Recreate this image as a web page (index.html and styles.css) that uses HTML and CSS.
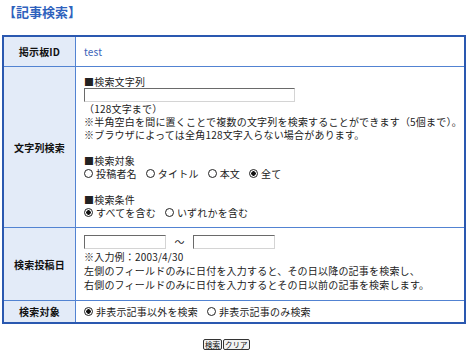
FILE: index.html
```html
<!DOCTYPE html>
<html lang="ja">

<head>
    <meta charset="UTF-8">
    <title>記事検索</title>
    <link rel="stylesheet" href="styles.css">
</head>

<body>
    <h1 class="page-title">【記事検索】</h1>

    <form class="search-form" onsubmit="return false;">
        <table class="search-table">
            <tr class="row-id">
                <th class="label">掲示板ID</th>
                <td class="value"><span class="board-id">test</span></td>
            </tr>
            <tr class="row-text">
                <th class="label">文字列検索</th>
                <td class="value">
                    <div class="line">■検索文字列</div>
                    <input type="text" class="field field-long">
                    <div class="line">（128文字まで）</div>
                    <div class="line">※半角空白を間に置くことで複数の文字列を検索することができます（5個まで）。</div>
                    <div class="line">※ブラウザによっては全角128文字入らない場合があります。</div>
                    <div class="line gap">■検索対象</div>
                    <div class="line options">
                        <label><input type="radio" name="target">投稿者名</label>
                        <label><input type="radio" name="target">タイトル</label>
                        <label><input type="radio" name="target">本文</label>
                        <label><input type="radio" name="target" checked>全て</label>
                    </div>
                    <div class="line gap">■検索条件</div>
                    <div class="line options">
                        <label><input type="radio" name="cond" checked>すべてを含む</label>
                        <label><input type="radio" name="cond">いずれかを含む</label>
                    </div>
                </td>
            </tr>
            <tr class="row-date">
                <th class="label">検索投稿日</th>
                <td class="value">
                    <div class="date-range">
                        <input type="text" class="field field-date">
                        <span class="tilde">～</span>
                        <input type="text" class="field field-date">
                    </div>
                    <div class="line">※入力例：2003/4/30</div>
                    <div class="line">左側のフィールドのみに日付を入力すると、その日以降の記事を検索し、</div>
                    <div class="line">右側のフィールドのみに日付を入力するとその日以前の記事を検索します。</div>
                </td>
            </tr>
            <tr class="row-hidden">
                <th class="label">検索対象</th>
                <td class="value">
                    <div class="line options">
                        <label><input type="radio" name="hidden" checked>非表示記事以外を検索</label>
                        <label><input type="radio" name="hidden">非表示記事のみ検索</label>
                    </div>
                </td>
            </tr>
        </table>

        <div class="buttons">
            <button type="submit" class="btn">検索</button>
            <button type="reset" class="btn">クリア</button>
        </div>
    </form>
</body>

</html>
```

FILE: styles.css
```css
body {
    margin: 0;
    padding: 3px 4px 0 2px;
    font-family: "Noto Sans CJK JP", sans-serif;
    font-size: 10px;
    letter-spacing: 0.2px;
    line-height: 13px;
    color: #222;
    background: #fff;
}

.page-title {
    margin: 0 0 15px 1px;
    font-size: 13px;
    line-height: 17px;
    letter-spacing: 0;
    font-weight: bold;
    color: #2f62bd;
}

.search-form {
    margin: 0;
}

.search-table {
    width: 464px;
    table-layout: fixed;
    border-collapse: collapse;
    border: 2px solid #2a58b0;
}

.search-table th,
.search-table td {
    border: 1px solid #5283d2;
}

.label {
    width: 71px;
    padding: 0;
    background: #e3ebf8;
    font-weight: bold;
    text-align: center;
    color: #111;
}

.value {
    padding: 0 8px;
    text-align: left;
    vertical-align: top;
}

.row-id .value {
    padding-top: 8px;
    padding-bottom: 8px;
}

.row-text .value {
    padding-top: 8px;
    padding-bottom: 8px;
}

.row-date .value {
    padding-top: 7px;
    padding-bottom: 8px;
    line-height: 14px;
}

.row-hidden .value {
    padding-top: 4px;
    padding-bottom: 4px;
}

.board-id {
    color: #3c63b8;
}

.line {
    white-space: nowrap;
}

.gap {
    margin-top: 13px;
}

.field {
    display: block;
    box-sizing: border-box;
    height: 14px;
    margin: 0;
    padding: 0 2px;
    border: 1px solid;
    border-color: #6a6a6a #d4d4d4 #d4d4d4 #6a6a6a;
    background: #fff;
    font: inherit;
}

.field-long {
    width: 211px;
}

.date-range {
    display: flex;
    align-items: center;
    height: 14px;
    margin-bottom: 1px;
}

.field-date {
    width: 82px;
}

.tilde {
    width: 27px;
    text-align: center;
}

.options {
    display: flex;
    gap: 9px;
}

.options label {
    display: flex;
    align-items: center;
}

.options input {
    appearance: none;
    box-sizing: border-box;
    width: 9px;
    height: 9px;
    margin: 0 3px 0 0;
    border: 1px solid #222;
    border-radius: 50%;
    background: #fff;
}

.options input:checked {
    background: radial-gradient(circle, #111 0 2px, #fff 2.5px);
}

.buttons {
    display: flex;
    gap: 1px;
    margin: 15px 0 0 201px;
}

.btn {
    box-sizing: border-box;
    height: 11px;
    padding: 0 1px;
    border: 1px solid #333;
    border-radius: 2px;
    background: #f2f2f2;
    font-family: "Noto Sans CJK JP", sans-serif;
    font-size: 7.5px;
    line-height: 9px;
    color: #111;
}
```
